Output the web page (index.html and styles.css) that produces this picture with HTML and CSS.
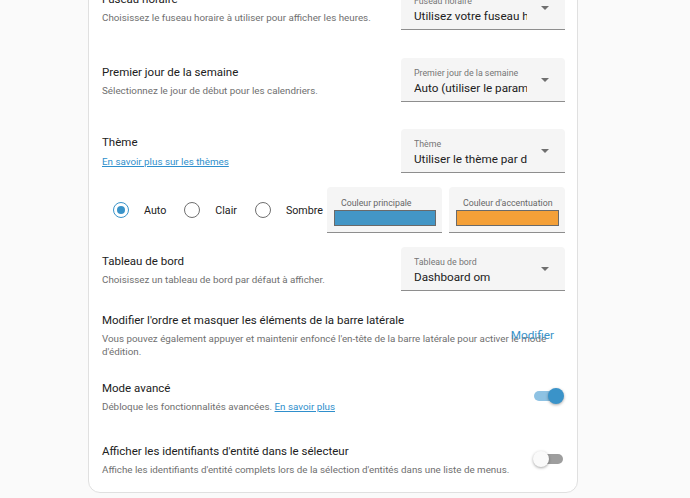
FILE: index.html
```html
<!DOCTYPE html>
<html lang="fr">
<head>
<meta charset="utf-8">
<link rel="stylesheet" href="styles.css">
</head>
<body>
<div class="card">
  <div class="row r1">
    <div class="text">
      <div class="title">Fuseau horaire</div>
      <div class="desc">Choisissez le fuseau horaire à utiliser pour afficher les heures.</div>
    </div>
    <div class="select">
      <div class="sel-text">
        <div class="sel-label">Fuseau horaire</div>
        <div class="sel-value">Utilisez votre fuseau horaire local</div>
      </div>
      <div class="arrow"></div>
    </div>
  </div>
  <div class="row r2">
    <div class="text">
      <div class="title">Premier jour de la semaine</div>
      <div class="desc">Sélectionnez le jour de début pour les calendriers.</div>
    </div>
    <div class="select">
      <div class="sel-text">
        <div class="sel-label">Premier jour de la semaine</div>
        <div class="sel-value">Auto (utiliser le paramètre de langue)</div>
      </div>
      <div class="arrow"></div>
    </div>
  </div>
  <div class="row r3">
    <div class="text">
      <div class="title">Thème</div>
      <a class="link desc-link" href="#">En savoir plus sur les thèmes</a>
    </div>
    <div class="select">
      <div class="sel-text">
        <div class="sel-label">Thème</div>
        <div class="sel-value">Utiliser le thème par défaut</div>
      </div>
      <div class="arrow"></div>
    </div>
  </div>
  <div class="row radios">
    <div class="radio-item">
      <span class="radio-box"><span class="radio on"></span></span>
      <span class="radio-label">Auto</span>
    </div>
    <div class="radio-item">
      <span class="radio-box"><span class="radio"></span></span>
      <span class="radio-label">Clair</span>
    </div>
    <div class="radio-item">
      <span class="radio-box"><span class="radio"></span></span>
      <span class="radio-label">Sombre</span>
    </div>
    <div class="color-field cf1">
      <div class="cf-label">Couleur principale</div>
      <div class="swatch primary"></div>
    </div>
    <div class="color-field cf2">
      <div class="cf-label">Couleur d'accentuation</div>
      <div class="swatch accent"></div>
    </div>
  </div>
  <div class="row r4">
    <div class="text">
      <div class="title">Tableau de bord</div>
      <div class="desc">Choisissez un tableau de bord par défaut à afficher.</div>
    </div>
    <div class="select">
      <div class="sel-text">
        <div class="sel-label">Tableau de bord</div>
        <div class="sel-value">Dashboard om</div>
      </div>
      <div class="arrow"></div>
    </div>
  </div>
  <div class="row r5">
    <div class="text wide">
      <div class="title">Modifier l'ordre et masquer les éléments de la barre latérale</div>
      <div class="desc">Vous pouvez également appuyer et maintenir enfoncé l'en-tête de la barre latérale pour activer le mode d'édition.</div>
    </div>
    <button class="btn">Modifier</button>
  </div>
  <div class="row r6">
    <div class="text">
      <div class="title">Mode avancé</div>
      <div class="desc">Débloque les fonctionnalités avancées. <a class="link" href="#">En savoir plus</a></div>
    </div>
    <div class="toggle on"><span class="track"></span><span class="knob"></span></div>
  </div>
  <div class="row r7">
    <div class="text">
      <div class="title">Afficher les identifiants d'entité dans le sélecteur</div>
      <div class="desc">Affiche les identifiants d'entité complets lors de la sélection d'entités dans une liste de menus.</div>
    </div>
    <div class="toggle"><span class="track"></span><span class="knob"></span></div>
  </div>
</div>
</body>
</html>
```
FILE: styles.css
```css
* { box-sizing: border-box; }
html, body { margin: 0; padding: 0; }
body {
  background: #fafafa;
  font-family: Roboto, "Noto Sans", sans-serif;
  color: #212121;
  overflow: hidden;
  height: 498px;
}
.card {
  margin: -30px 0 0 88px;
  width: 490px;
  background: #fff;
  border: 1px solid #e0e0e0;
  border-radius: 12px;
}
.row {
  display: flex;
  align-items: center;
  padding: 0 12px 0 13px;
  position: relative;
}
.r1 { height: 73px; }
.r2 { height: 72px; }
.r3 { height: 70px; }
.radios { height: 48px; }
.r4 { height: 70px; }
.r5 { height: 62px; }
.r6 { height: 60px; }
.r7 { height: 66px; }
.text { flex: 1; min-width: 0; }
.title {
  font-size: 11.5px;
  line-height: 17px;
  color: #212121;
}
.desc, .desc-link {
  font-size: 9.8px;
  line-height: 13px;
  color: #6f6f6f;
  margin-top: 3px;
  display: block;
}
.link { color: #2f8fcc; text-decoration: underline; }
.desc-link { color: #2f8fcc; margin-top: 4px; }
.wide { max-width: 454px; flex: none; }
.select {
  width: 164px;
  height: 44px;
  flex: none;
  background: #f5f5f5;
  border-radius: 4px 4px 0 0;
  border-bottom: 1px solid #8e8e8e;
  display: flex;
  padding-left: 13px;
}
.sel-text { width: 113px; overflow: hidden; padding-top: 10px; }
.sel-label {
  font-size: 8.8px;
  line-height: 10px;
  color: #757575;
  white-space: nowrap;
}
.sel-value {
  font-size: 11.7px;
  line-height: 16px;
  margin-top: 2px;
  color: #212121;
  white-space: nowrap;
}
.arrow {
  width: 0; height: 0;
  margin: 20px 0 0 14px;
  border-left: 4px solid transparent;
  border-right: 4px solid transparent;
  border-top: 4px solid #6f6f6f;
}
.radio-item { display: flex; align-items: center; }
.radio-box {
  width: 38px; height: 38px;
  display: flex; align-items: center; justify-content: center;
}
.radio {
  width: 16px; height: 16px;
  border-radius: 50%;
  border: 1.8px solid #6f6f6f;
  display: flex; align-items: center; justify-content: center;
}
.radio.on { border-color: #3a93c9; }
.radio.on::after {
  content: "";
  width: 8px; height: 8px;
  border-radius: 50%;
  background: #3a93c9;
}
.radio-label {
  font-size: 10.7px;
  color: #212121;
  margin-left: 4px;
  margin-right: 7px;
}
.color-field {
  height: 46px;
  background: #f5f5f5;
  border-radius: 4px 4px 0 0;
  border-bottom: 1px solid #8e8e8e;
  padding: 10px 6px 0 7px;
  flex: none;
}
.cf1 { width: 115px; margin-left: -3px; }
.cf2 { width: 116px; margin-left: 7px; }
.cf-label {
  font-size: 8.8px;
  line-height: 12px;
  color: #666;
  padding-left: 7px;
  white-space: nowrap;
}
.swatch {
  height: 16px;
  margin-top: 1px;
  border: 1px solid #6a6a6a;
}
.primary { background: #4396c6; }
.accent { background: #f4a038; }
.btn {
  position: absolute;
  right: 23px;
  top: 23px;
  background: none;
  border: 0;
  padding: 0;
  font-family: Roboto, sans-serif;
  font-size: 11.8px;
  line-height: 16px;
  color: #3a93c9;
}
.toggle {
  position: relative;
  width: 31px; height: 16px;
  flex: none;
  margin-right: 1px;
}
.track {
  position: absolute;
  left: 1px; right: 1px; top: 3px;
  height: 10px;
  border-radius: 5px;
  background: #9e9e9e;
}
.toggle.on .track { background: #8ec2e3; }
.knob {
  position: absolute;
  top: 0; left: 0;
  width: 16px; height: 16px;
  border-radius: 50%;
  background: #fafafa;
  box-shadow: 0 1px 3px rgba(0,0,0,0.35);
}
.toggle.on .knob { left: auto; right: 0; background: #3a93c9; }
```
